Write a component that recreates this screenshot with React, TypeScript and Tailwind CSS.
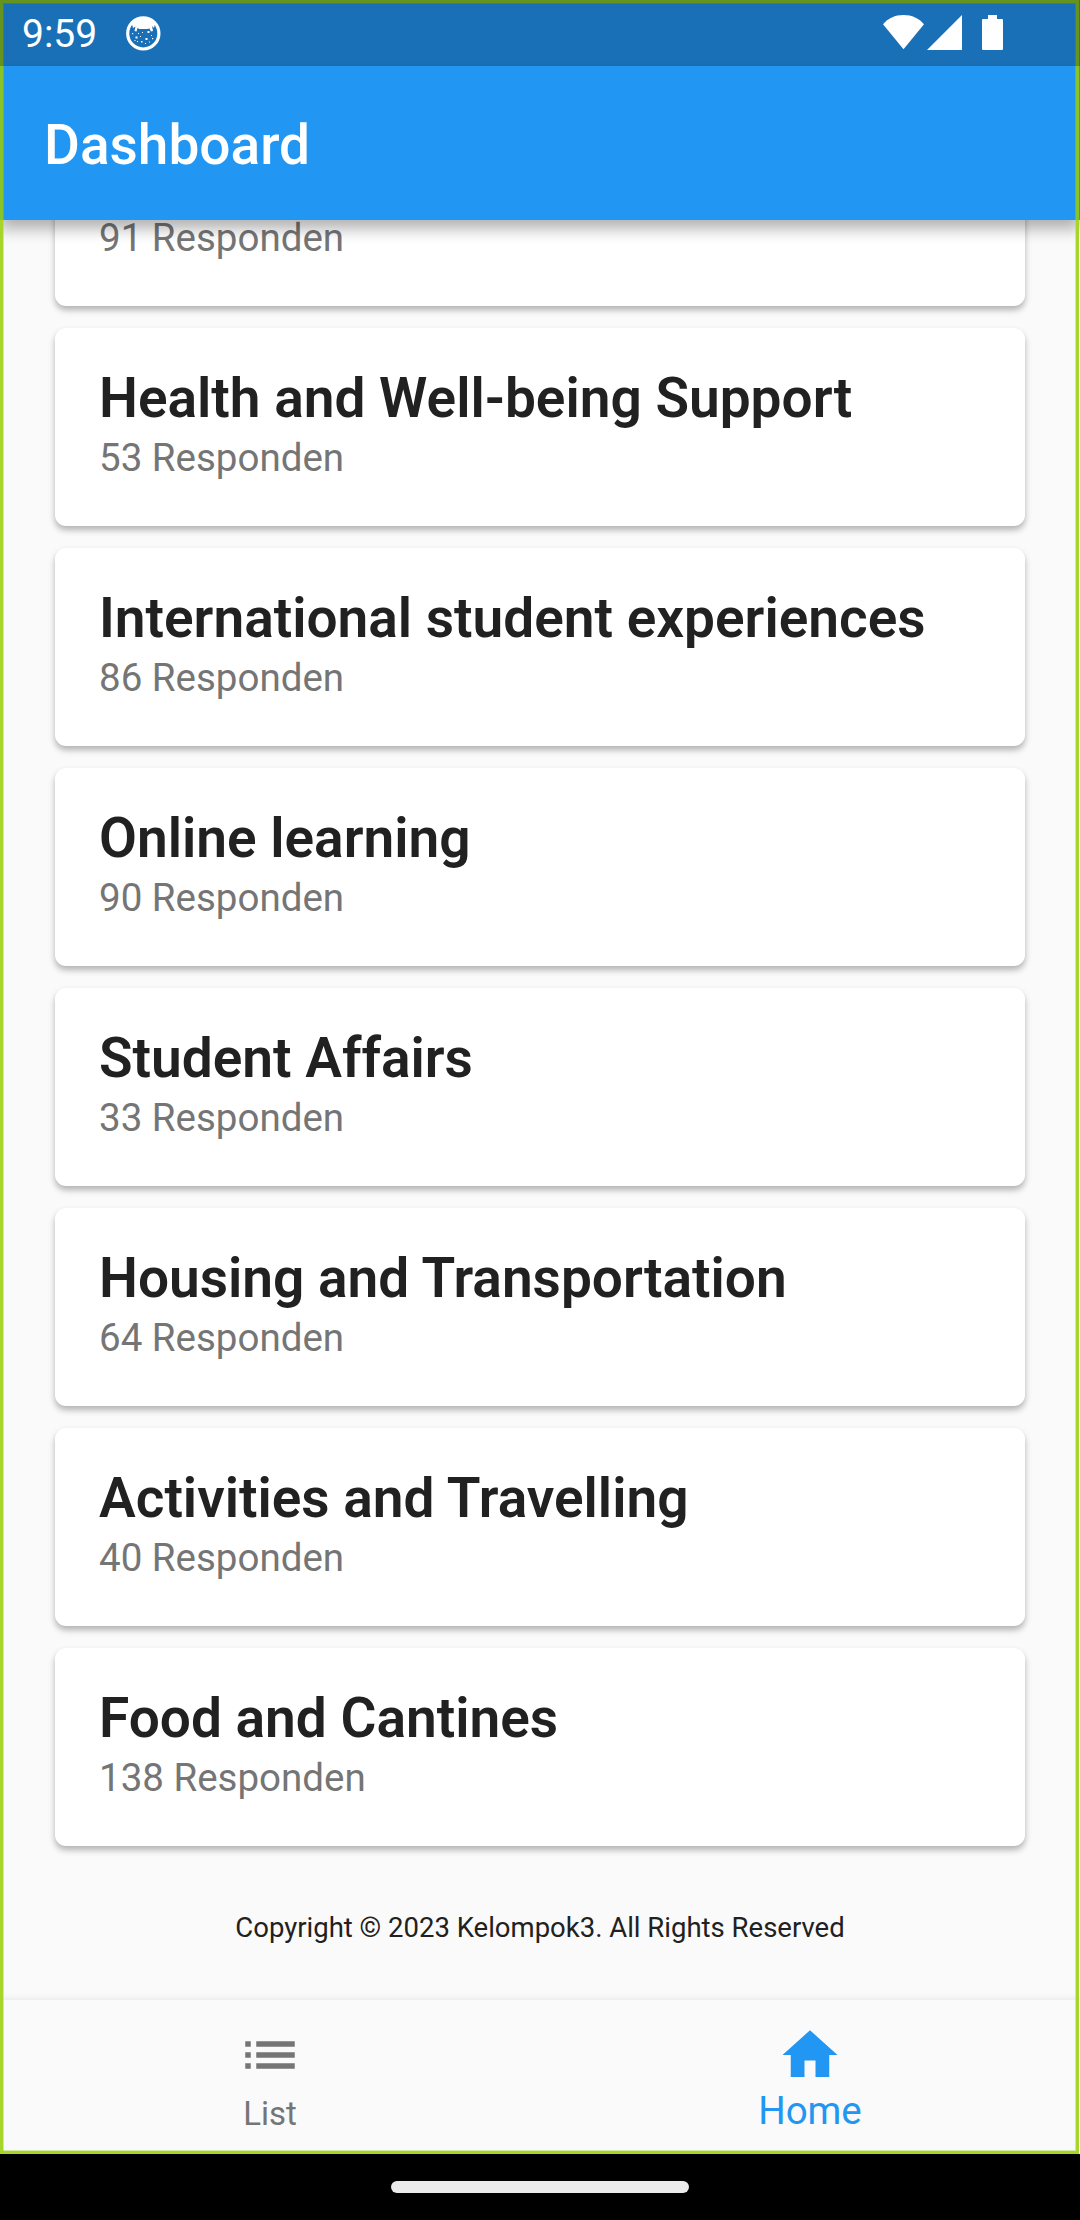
type Survey = { title?: string; count: number };

const surveys: Survey[] = [
  { count: 91 },
  { title: "Health and Well-being Support", count: 53 },
  { title: "International student experiences", count: 86 },
  { title: "Online learning", count: 90 },
  { title: "Student Affairs", count: 33 },
  { title: "Housing and Transportation", count: 64 },
  { title: "Activities and Travelling", count: 40 },
  { title: "Food and Cantines", count: 138 },
];

function StatusBar() {
  return (
    <div className="flex h-[66px] shrink-0 items-start bg-[#1a70b7] text-white">
      <span className="ml-[22px] mt-[11px] w-[76px] text-[39px] leading-[46px]">9:59</span>
      <svg className="ml-[28px] mt-[16px] h-[35px] w-[35px]" viewBox="0 0 35 35" fill="none">
        <circle cx="17.3" cy="17.4" r="15.6" stroke="white" strokeWidth="3.2" />
        <path
          fill="white"
          d="M6 8C9 3.500 13 2 17.300 2C22 2 26 3.500 29 8L28 12L26 10L27 15L25 15.500L23.500 12.500L21 13H13.500L11.500 12L10.500 15.500L8.500 15L9.500 10.500L7 12Z"
        />
        <g fill="white">
          <rect x="9.500" y="20.500" width="2" height="2" />
          <rect x="19.500" y="22" width="2" height="2" />
          <rect x="21.500" y="15" width="2" height="2" />
          <rect x="15" y="25" width="1.500" height="1.500" />
          <rect x="14" y="20" width="1" height="1" />
          <rect x="16" y="16" width="1" height="1" />
          <rect x="25" y="19" width="1" height="1" />
          <rect x="26" y="22" width="1.200" height="1.200" />
          <rect x="6" y="17" width="1.200" height="1.200" />
          <rect x="11" y="25" width="1" height="1" />
          <rect x="19" y="27" width="1" height="1" />
          <rect x="23" y="25.500" width="1" height="1" />
          <rect x="8.500" y="24" width="1" height="1" />
          <rect x="12" y="17" width="1" height="1" />
        </g>
      </svg>
      <svg className="ml-auto mr-[77px] mt-[15px] h-[35px] w-[120px]" viewBox="0 0 120 35" fill="white">
        <path d="M0 9.300C5 3.300 12 0 20.500 0S36 3.300 41 9.300L20.500 34.300Z" />
        <path d="M79 0V35H44Z" />
        <path d="M105 0h9v4h5q1 0 1 1v29q0 1 -1 1h-19q-1 0 -1 -1v-29q0 -1 1 -1h5z" />
      </svg>
    </div>
  );
}

function SurveyCard({ title, count }: Survey) {
  return (
    <article className="flex h-[198px] shrink-0 flex-col rounded-[11px] bg-white px-[44px] pt-[38px] shadow-[0_4px_6px_rgba(0,0,0,0.29)]">
      <h2 className="h-[65px] whitespace-nowrap text-[55px] font-semibold leading-[65px] text-[#212121]">{title}</h2>
      <p className="mt-[4px] text-[38.5px] leading-[46px] text-[#757575]">{count} Responden</p>
    </article>
  );
}

export default function App() {
  return (
    <div className="relative flex h-[2220px] w-[1080px] flex-col overflow-hidden bg-[#fafafa] font-[Roboto,sans-serif]">
      <StatusBar />
      <header className="z-10 flex h-[154px] shrink-0 items-center bg-[#2196f3] px-[44px] shadow-[0_9px_14px_rgba(0,0,0,0.3)]">
        <h1 className="mt-[4px] text-[55px] font-medium leading-[65px] text-white">Dashboard</h1>
      </header>

      <main className="flex min-h-0 flex-1 flex-col justify-end gap-[22px] overflow-hidden px-[55px]">
        {surveys.map((s) => (
          <SurveyCard key={s.count} {...s} />
        ))}
        <p className="flex h-[132px] shrink-0 items-start justify-center whitespace-nowrap pt-[41px] text-[27.5px] leading-[38px] text-[#212121]">
          Copyright © 2023 Kelompok3. All Rights Reserved
        </p>
      </main>

      <nav className="z-10 grid h-[154px] shrink-0 grid-cols-2 bg-[#fafafa] shadow-[0_0_8px_rgba(0,0,0,0.1)]">
        <a className="flex flex-col items-center pt-[22px] text-[#757575]">
          <svg className="h-[66px] w-[66px]" viewBox="0 0 24 24" fill="currentColor">
            <path d="M3 13h2v-2H3v2zm0 4h2v-2H3v2zm0-8h2V7H3v2zm4 4h14v-2H7v2zm0 4h14v-2H7v2zM7 7v2h14V7H7z" />
          </svg>
          <span className="mt-[6px] text-[33px] leading-[39px]">List</span>
        </a>
        <a className="flex flex-col items-center pt-[22px] text-[#2196f3]">
          <svg className="h-[66px] w-[66px]" viewBox="0 0 24 24" fill="currentColor">
            <path d="M10 20v-6h4v6h5v-8h3L12 3 2 12h3v8z" />
          </svg>
          <span className="text-[38.5px] leading-[45px]">Home</span>
        </a>
      </nav>

      <footer className="z-10 flex h-[66px] shrink-0 justify-center bg-black pt-[27px]">
        <div className="h-[12px] w-[298px] rounded-full bg-[#ebebeb]" />
      </footer>

      {/* Green frame drawn over the app window, darker under the status bar */}
      <div className="pointer-events-none absolute left-0 top-0 z-20 h-[66px] w-[1079px] border-[3px] border-b-0 border-[#64931f] shadow-[inset_1px_1px_0_rgba(100,147,31,0.45),inset_-1px_0_0_rgba(100,147,31,0.45)]" />
      <div className="pointer-events-none absolute left-0 top-[66px] z-20 h-[154px] w-[1079px] border-x-[3px] border-[#87c42a] shadow-[inset_1px_0_0_rgba(150,205,60,0.45),inset_-1px_0_0_rgba(150,205,60,0.45)]" />
      <div className="pointer-events-none absolute left-0 top-[220px] z-20 h-[1934px] w-[1079px] border-[3px] border-t-0 border-[#a6d62c] shadow-[inset_1px_0_0_rgba(166,214,44,0.45),inset_-1px_-1px_0_rgba(166,214,44,0.45)]" />
    </div>
  );
}
